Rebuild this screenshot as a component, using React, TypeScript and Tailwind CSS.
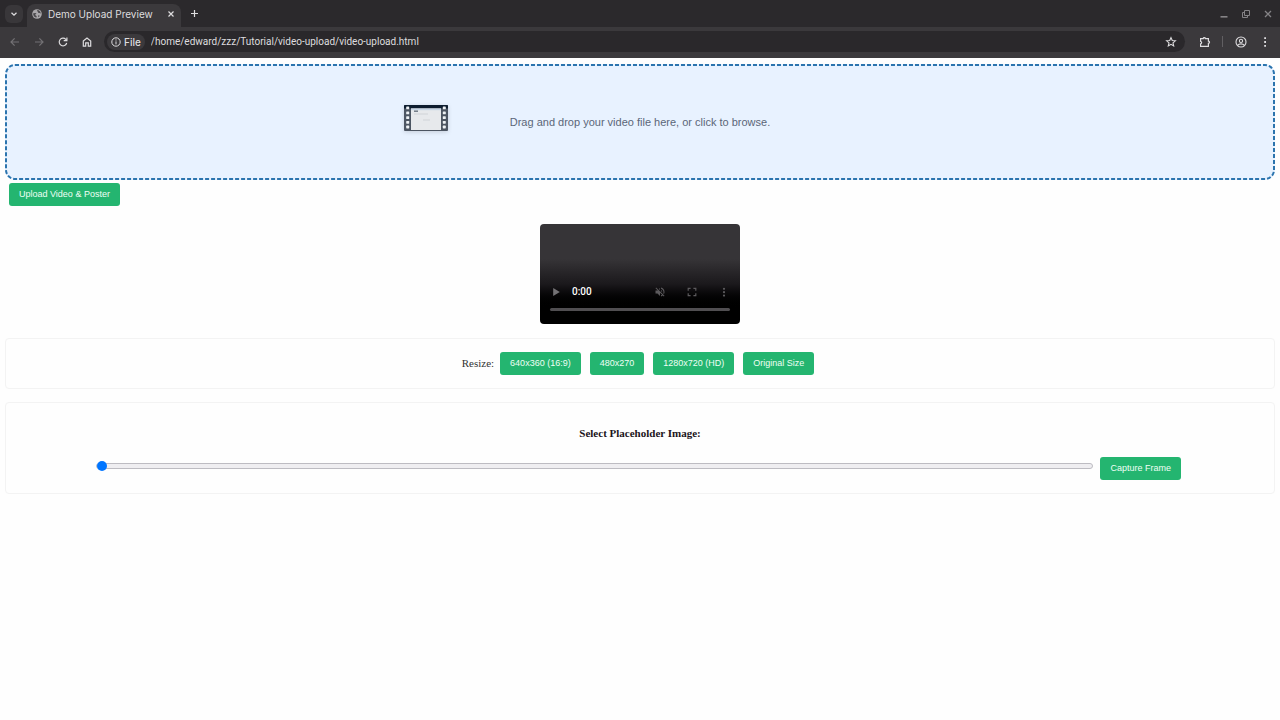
import React, { useState } from 'react';

interface IconButtonProps {
  label: string;
  className?: string;
  children: React.ReactNode;
}

const IconButton: React.FC<IconButtonProps> = ({ label, className = '', children }) => (
  <button type="button" aria-label={label} className={`flex shrink-0 items-center justify-center ${className}`}>
    {children}
  </button>
);

interface ActionButtonProps {
  onClick?: () => void;
  children: React.ReactNode;
}

const ActionButton: React.FC<ActionButtonProps> = ({ onClick, children }) => (
  <button
    type="button"
    onClick={onClick}
    className="h-[23px] shrink-0 whitespace-nowrap rounded-[3px] bg-[#24b570] px-[10px] font-['Liberation_Sans',Arial,sans-serif] text-[9px] leading-[23px] text-[#effff5]"
  >
    {children}
  </button>
);

const sizes = ['640x360 (16:9)', '480x270', '1280x720 (HD)', 'Original Size'];

const BrowserBar: React.FC = () => (
  <header className="bg-[#3b393c] font-[Inter,sans-serif] text-[#dedddf]">
    {/* Tab strip */}
    <div className="flex h-[27px] items-center bg-[#2b292c]">
      <div className="flex h-full w-[27px] items-center justify-center">
        <IconButton label="Search tabs" className="h-[18px] w-[18px] rounded-md bg-[#39373a]">
          <svg viewBox="0 0 8 8" className="h-2 w-2" fill="none" stroke="currentColor" strokeWidth="1.3">
            <path d="M1.5 2.8 4 5.2 6.5 2.8" />
          </svg>
        </IconButton>
      </div>
      <div className="mt-1 flex h-[23px] w-[154px] items-center rounded-t-lg bg-[#3b393c] pb-1 pl-[5px] pr-1">
        <svg viewBox="0 0 10 10" className="h-[10px] w-[10px] shrink-0">
          <circle cx="5" cy="5" r="4.8" fill="#a9a7aa" />
          <path
            d="M1.2 4.2 3.6 4l1 .9H3.4v1.3l1.2.8v1.6C2.4 8.4 1 6.6 1.2 4.2ZM5.2 1v1.2l1 .9v1h1.5l1 .6C8.8 2.7 7.4 1.1 5.2 1ZM6.2 6.2l1.4.3-.4 1.3-.9.4Z"
            fill="#4a484b"
          />
        </svg>
        <span className="ml-[6px] flex-1 whitespace-nowrap text-[10px] leading-[14px]">Demo Upload Preview</span>
        <IconButton label="Close tab" className="h-3 w-3">
          <svg viewBox="0 0 8 8" className="h-2 w-2" stroke="currentColor" strokeWidth="1.2">
            <path d="m1.5 1.5 5 5m0-5-5 5" />
          </svg>
        </IconButton>
      </div>
      <IconButton label="New tab" className="ml-2 h-[11px] w-[11px]">
        <svg viewBox="0 0 9 9" className="h-[9px] w-[9px]" stroke="currentColor" strokeWidth="1.2">
          <path d="M4.5 1v7M1 4.5h7" />
        </svg>
      </IconButton>
      <div className="ml-auto flex items-center gap-3 pr-[7px] text-[#858386]">
        <IconButton label="Minimize" className="h-[10px] w-[10px]">
          <svg viewBox="0 0 10 10" className="h-[10px] w-[10px]" fill="currentColor">
            <path d="M1.5 7h7v1.6h-7z" />
          </svg>
        </IconButton>
        <IconButton label="Restore" className="h-[10px] w-[10px]">
          <svg viewBox="0 0 10 10" className="h-[10px] w-[10px]" fill="none" stroke="currentColor">
            <path d="M3.5 1.5h5v5h-5z" />
            <path d="M3.5 3.5h-2v5h5v-2" />
          </svg>
        </IconButton>
        <IconButton label="Close window" className="h-[10px] w-[10px]">
          <svg viewBox="0 0 10 10" className="h-[10px] w-[10px]" stroke="currentColor" strokeWidth="1.3">
            <path d="m2 2 6 6m0-6L2 8" />
          </svg>
        </IconButton>
      </div>
    </div>

    {/* Toolbar */}
    <div className="flex h-[31px] items-center pb-[2px] pl-[9px] pr-[10px]">
      <div className="flex items-center gap-3">
        <IconButton label="Back" className="h-3 w-3 text-[#737174]">
          <svg viewBox="0 0 12 12" className="h-3 w-3" fill="none" stroke="currentColor" strokeWidth="1.2">
            <path d="M10 6H2.2M5.6 2.4 2 6l3.6 3.6" />
          </svg>
        </IconButton>
        <IconButton label="Forward" className="h-3 w-3 text-[#737174]">
          <svg viewBox="0 0 12 12" className="h-3 w-3" fill="none" stroke="currentColor" strokeWidth="1.2">
            <path d="M2 6h7.8M6.4 2.4 10 6 6.4 9.6" />
          </svg>
        </IconButton>
        <IconButton label="Reload" className="h-3 w-3">
          <svg viewBox="0 0 12 12" className="h-3 w-3" fill="none" stroke="currentColor" strokeWidth="1.2">
            <path d="M9.7 7A3.8 3.8 0 1 1 8.8 3.4L9.6 4.2" />
            <path d="M9.9 1.5v3.2H6.7" />
          </svg>
        </IconButton>
        <IconButton label="Home" className="h-3 w-3">
          <svg viewBox="0 0 12 12" className="h-3 w-3" fill="none" stroke="currentColor" strokeWidth="1.2">
            <path d="M2.3 5 6 2.1 9.7 5v5.1H7.3V6.8H4.7v3.3H2.3Z" />
          </svg>
        </IconButton>
      </div>
      <div className="ml-[11px] flex h-[21px] flex-1 items-center rounded-full bg-[#2a282b] pl-[3px] pr-[8px]">
        <button
          type="button"
          className="flex h-4 items-center gap-[3px] rounded-full bg-[#3b393c] px-1 text-[10px] font-medium leading-4"
        >
          <svg viewBox="0 0 10 10" className="h-[10px] w-[10px]" fill="none" stroke="currentColor">
            <circle cx="5" cy="5" r="4.2" />
            <path d="M5 4.4v3M5 2.4v1.1" />
          </svg>
          File
        </button>
        <input
          type="text"
          aria-label="Address"
          defaultValue="/home/edward/zzz/Tutorial/video-upload/video-upload.html"
          className="ml-[6px] min-w-0 flex-1 bg-transparent font-[Roboto,sans-serif] text-[10px] leading-4 outline-none"
        />
        <IconButton label="Bookmark" className="h-3 w-3">
          <svg viewBox="0 0 12 12" className="h-3 w-3" fill="none" stroke="currentColor" strokeWidth="1.1">
            <path d="m6 1.6 1.25 2.9 3.15.3L8 6.9l.7 3.1L6 8.4 3.3 10 4 6.9 1.6 4.8l3.15-.3Z" />
          </svg>
        </IconButton>
      </div>
      <IconButton label="Extensions" className="ml-[14px] h-3 w-3">
        <svg viewBox="0 0 12 12" className="h-3 w-3" fill="none" stroke="currentColor" strokeWidth="1.2">
          <path d="M1.6 2.6h2.6c.1-1.2 2.1-1.2 2.2 0h3v2.5c1.5.1 1.5 2.1 0 2.2v3H1.6V7.9c1.4-.3 1.4-2.3 0-2.6Z" />
        </svg>
      </IconButton>
      <div className="ml-[11px] h-[11px] w-px bg-[#615f62]" />
      <IconButton label="Profile" className="ml-3 h-3 w-3">
        <svg viewBox="0 0 12 12" className="h-3 w-3" fill="none" stroke="currentColor" strokeWidth="1.1">
          <circle cx="6" cy="6" r="5" />
          <circle cx="6" cy="4.9" r="1.6" />
          <path d="M2.6 9.4c1.6-2 5.2-2 6.8 0" />
        </svg>
      </IconButton>
      <IconButton label="Menu" className="ml-[13px] h-3 w-[10px]">
        <svg viewBox="0 0 10 12" className="h-3 w-[10px]" fill="currentColor">
          <path d="M4.2 1.2h1.8V3H4.2zM4.2 5.1h1.8v1.8H4.2zM4.2 9h1.8v1.8H4.2z" />
        </svg>
      </IconButton>
    </div>
  </header>
);

const FilmIcon: React.FC = () => (
  <svg viewBox="0 0 44 26" className="h-[26px] w-11 drop-shadow-sm">
    <rect width="44" height="26" rx="1" fill="#4c5562" />
    <path d="M0 1Q0 0 1 0h42q1 0 1 1v2.5H0Z" fill="#0c1c2f" />
    <path d="M7 3.5h30V25H7z" fill="#e7e9ec" />
    <path d="M7 3.5h30v1.7H7z" fill="#c7d6e6" />
    <path d="M10 5.5h4v1.4h-4z" fill="#69737f" />
    <path d="M10 9h14M19 15h7" stroke="#d0d3d7" />
    {[1.5, 6.5, 11.2, 15.9, 20.6].map((y) => (
      <g key={y} fill="#edf1f4">
        <rect x="2.2" y={y} width="3" height="2.8" rx=".6" />
        <rect x="38.8" y={y} width="3" height="2.8" rx=".6" />
      </g>
    ))}
  </svg>
);

const VideoPlayer: React.FC = () => (
  <div className="mx-auto flex h-[100px] w-[200px] flex-col justify-end rounded-[4px] bg-linear-to-b from-[#363437] from-35% via-[#1b191c] via-60% to-black to-85% px-[10px] pb-[13px]">
    <div className="flex h-5 items-center text-[#5c5a5d]">
      <IconButton label="Play" className="h-3 w-3">
        <svg viewBox="0 0 12 12" className="h-3 w-3" fill="#747275">
          <path d="M3.2 2v8L9.8 6Z" />
        </svg>
      </IconButton>
      <span className="ml-[10px] font-[Roboto,sans-serif] text-[10px] font-medium leading-5 text-white">0:00</span>
      <div className="ml-auto flex gap-5">
        <IconButton label="Unmute" className="h-3 w-3">
          <svg viewBox="0 0 24 24" className="h-3 w-3" fill="currentColor">
            <path d="M16.5 12A4.5 4.5 0 0 0 14 7.97v2.21l2.45 2.45c.03-.2.05-.41.05-.63zm2.5 0c0 .94-.2 1.82-.54 2.64l1.51 1.51A8.8 8.8 0 0 0 21 12c0-4.28-2.99-7.86-7-8.77v2.06c2.89.86 5 3.54 5 6.71zM4.27 3 3 4.27 7.73 9H3v6h4l5 5v-6.73l4.25 4.25c-.67.52-1.42.93-2.25 1.18v2.06a9 9 0 0 0 3.69-1.81L19.73 21 21 19.73l-9-9L4.27 3zM12 4 9.91 6.09 12 8.18V4z" />
          </svg>
        </IconButton>
        <IconButton label="Full screen" className="h-3 w-3">
          <svg viewBox="0 0 12 12" className="h-3 w-3" fill="none" stroke="currentColor" strokeWidth="1.2">
            <path d="M2.2 4.7V2.3h2.4M7.4 2.3h2.4v2.4M9.8 7.3v2.4H7.4M4.6 9.7H2.2V7.3" />
          </svg>
        </IconButton>
        <IconButton label="More options" className="h-3 w-3">
          <svg viewBox="0 0 12 12" className="h-3 w-3" fill="currentColor">
            <circle cx="6" cy="2.8" r="1.1" />
            <circle cx="6" cy="6.2" r="1.1" />
            <circle cx="6" cy="9.6" r="1.1" />
          </svg>
        </IconButton>
      </div>
    </div>
    <input
      type="range"
      aria-label="Seek"
      defaultValue={0}
      className="mt-[6px] h-[3px] w-full appearance-none rounded-full bg-[#504e51] [&::-webkit-slider-thumb]:h-0 [&::-webkit-slider-thumb]:w-0 [&::-webkit-slider-thumb]:appearance-none"
    />
  </div>
);

const App: React.FC = () => {
  const [frame, setFrame] = useState(0);

  return (
    <div className="min-h-screen bg-[#fefefe]">
      <BrowserBar />

      <main className="px-[5px] pt-[6px]">
        {/* Drop zone */}
        <button
          type="button"
          className="relative grid h-[116px] w-full grid-cols-[1fr_auto_1fr] items-center rounded-[10px] bg-[#e8f2ff]"
        >
          <svg className="absolute inset-0 h-full w-full" fill="none" stroke="#2b74ae" strokeWidth="2" strokeDasharray="4 2">
            <rect x="1" y="1" rx="9" className="h-[calc(100%-2px)] w-[calc(100%-2px)]" />
          </svg>
          <span className="mr-[62px] flex justify-end pb-2">
            <FilmIcon />
          </span>
          <span className="font-['Liberation_Sans',Arial,sans-serif] text-[11px] leading-4 text-[#5b6678]">
            Drag and drop your video file here, or click to browse.
          </span>
        </button>

        <div className="flex px-1 pt-[3px]">
          <ActionButton>Upload Video &amp; Poster</ActionButton>
        </div>

        <div className="pt-[18px]">
          <VideoPlayer />
        </div>

        {/* Resize options */}
        <section className="mt-[14px] flex h-[51px] justify-center rounded-[4px] border border-[#f3f3f3] pt-[13px]">
          <span className="mr-[6px] font-['Liberation_Serif',serif] text-[11px] leading-[23px] text-[#333]">Resize:</span>
          <div className="mr-1 flex gap-[9px]">
            {sizes.map((size) => (
              <ActionButton key={size}>{size}</ActionButton>
            ))}
          </div>
        </section>

        {/* Placeholder frame picker */}
        <section className="mt-[13px] rounded-[4px] border border-[#f3f3f3] pb-[13px] pt-[22px]">
          <h2 className="text-center font-['Liberation_Serif',serif] text-[11px] font-bold leading-4 text-[#1c1420]">
            <label htmlFor="frame">Select Placeholder Image:</label>
          </h2>
          <div className="flex items-center px-[90px] pt-4">
            <input
              id="frame"
              type="range"
              min={0}
              max={100}
              value={frame}
              onChange={(e) => setFrame(Number(e.target.value))}
              className="mb-[6px] mr-[7px] h-[10px] min-w-0 flex-1 appearance-none bg-transparent [&::-webkit-slider-runnable-track]:h-[6px] [&::-webkit-slider-runnable-track]:rounded-full [&::-webkit-slider-runnable-track]:border [&::-webkit-slider-runnable-track]:border-[#bdbcc2] [&::-webkit-slider-runnable-track]:bg-[#efeef1] [&::-webkit-slider-thumb]:-mt-[3px] [&::-webkit-slider-thumb]:h-[10px] [&::-webkit-slider-thumb]:w-[10px] [&::-webkit-slider-thumb]:appearance-none [&::-webkit-slider-thumb]:rounded-full [&::-webkit-slider-thumb]:bg-[#0075ff]"
            />
            <div className="mr-[3px] flex">
              <ActionButton>Capture Frame</ActionButton>
            </div>
          </div>
        </section>
      </main>
    </div>
  );
};

export default App;
